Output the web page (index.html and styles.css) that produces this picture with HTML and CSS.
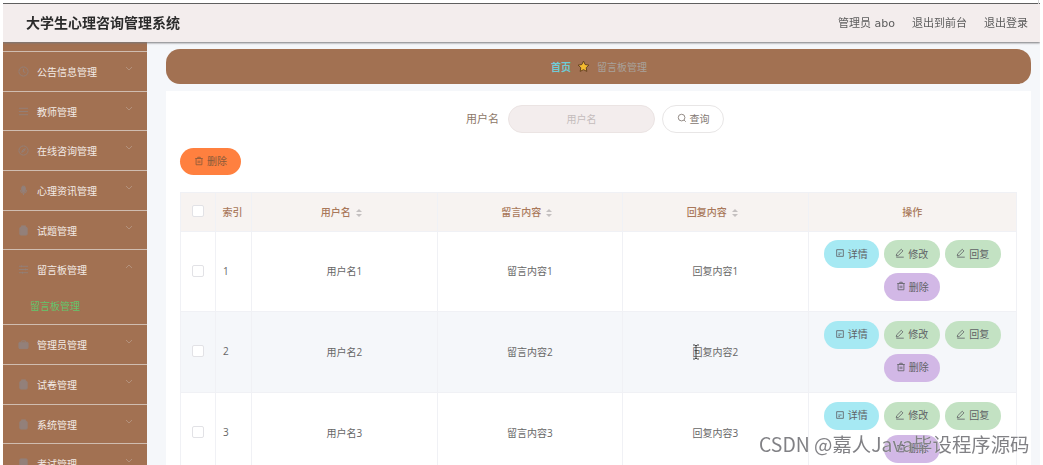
FILE: index.html
```html
<!DOCTYPE html>
<html lang="zh-CN">
<head>
<meta charset="utf-8">
<title>大学生心理咨询管理系统</title>
<link rel="stylesheet" href="styles.css">
</head>
<body>
<div class="app">
  <header class="navbar">
    <div class="brand">大学生心理咨询管理系统</div>
    <nav class="user-links"><span>管理员 abo</span><span>退出到前台</span><span>退出登录</span></nav>
  </header>
  <div class="layout">
    <aside class="sidebar">
      <div class="menu-item"><svg class="ico" viewBox="0 0 12 12"><circle cx="6" cy="6" r="5"/><path d="M6 3v3.2l2 1"/></svg><span class="menu-label">公告信息管理</span><svg class="chev" viewBox="0 0 8 5"><path d="M1 1l3 3 3-3"/></svg></div>
      <div class="menu-item"><svg class="ico" viewBox="0 0 12 12"><path d="M1 2.5h10M1 6h10M1 9.5h10"/></svg><span class="menu-label">教师管理</span><svg class="chev" viewBox="0 0 8 5"><path d="M1 1l3 3 3-3"/></svg></div>
      <div class="menu-item"><svg class="ico" viewBox="0 0 12 12"><circle cx="6" cy="6" r="5"/><path d="M8 4L6.6 6.6 4 8l1.4-2.6z"/></svg><span class="menu-label">在线咨询管理</span><svg class="chev" viewBox="0 0 8 5"><path d="M1 1l3 3 3-3"/></svg></div>
      <div class="menu-item"><svg class="ico" viewBox="0 0 12 12"><rect x="4" y="1" width="4" height="7" rx="2" class="solid"/><path d="M2.5 5.5a3.5 3.5 0 0 0 7 0M6 9v2"/></svg><span class="menu-label">心理资讯管理</span><svg class="chev" viewBox="0 0 8 5"><path d="M1 1l3 3 3-3"/></svg></div>
      <div class="menu-item"><svg class="ico" viewBox="0 0 12 12"><rect x="2" y="2.5" width="8" height="8.5" rx="1" class="solid"/><rect x="4" y="1" width="4" height="2.4" class="solid"/></svg><span class="menu-label">试题管理</span><svg class="chev" viewBox="0 0 8 5"><path d="M1 1l3 3 3-3"/></svg></div>
      <div class="menu-item menu-open"><svg class="ico" viewBox="0 0 12 12"><path d="M1 2.5h10M1 6h10M1 9.5h10M4 1.5v2M8 5v2M5 8.5v2"/></svg><span class="menu-label">留言板管理</span><svg class="chev" viewBox="0 0 8 5"><path d="M1 4l3-3 3 3"/></svg></div>
      <div class="submenu-item">留言板管理</div>
      <div class="menu-item"><svg class="ico" viewBox="0 0 12 12"><rect x="1" y="3.5" width="10" height="7" rx="1" class="solid"/><path d="M4 3.5V2h4v1.5"/></svg><span class="menu-label">管理员管理</span><svg class="chev" viewBox="0 0 8 5"><path d="M1 1l3 3 3-3"/></svg></div>
      <div class="menu-item"><svg class="ico" viewBox="0 0 12 12"><rect x="2" y="2.5" width="8" height="8.5" rx="1" class="solid"/><rect x="4" y="1" width="4" height="2.4" class="solid"/></svg><span class="menu-label">试卷管理</span><svg class="chev" viewBox="0 0 8 5"><path d="M1 1l3 3 3-3"/></svg></div>
      <div class="menu-item"><svg class="ico" viewBox="0 0 12 12"><rect x="2" y="2.5" width="8" height="8.5" rx="1" class="solid"/><rect x="4" y="1" width="4" height="2.4" class="solid"/></svg><span class="menu-label">系统管理</span><svg class="chev" viewBox="0 0 8 5"><path d="M1 1l3 3 3-3"/></svg></div>
      <div class="menu-item"><svg class="ico" viewBox="0 0 12 12"><rect x="2" y="1" width="8" height="10" rx="1" class="solid"/></svg><span class="menu-label">考试管理</span><svg class="chev" viewBox="0 0 8 5"><path d="M1 1l3 3 3-3"/></svg></div>
    </aside>
    <main class="main">
      <div class="crumbs">
        <span class="crumb-home">首页</span>
        <svg class="crumb-star" viewBox="0 0 14 14"><path d="M7 1.2l1.8 3.7 4 .6-2.9 2.8.7 4L7 10.4l-3.6 1.9.7-4L1.2 5.5l4-.6z"/></svg>
        <span class="crumb-current">留言板管理</span>
      </div>
      <section class="card">
        <div class="search">
          <label class="search-label">用户名</label>
          <div class="search-input">用户名</div>
          <button class="search-btn"><svg class="btn-ico" viewBox="0 0 12 12"><circle cx="5.5" cy="5.5" r="4"/><path d="M8.5 8.5l2 2"/></svg>查询</button>
        </div>
        <button class="del-btn"><svg class="btn-ico" viewBox="0 0 12 12"><path d="M1.5 3h9M4.5 3V1.5h3V3M2.5 3v7.5h7V3M5 5.5v3M7 5.5v3"/></svg>删除</button>
        <table class="grid">
          <colgroup><col class="c-check"><col class="c-index"><col class="c-text"><col class="c-text"><col class="c-text"><col></colgroup>
          <thead>
            <tr>
              <th><span class="checkbox"></span></th>
              <th class="th-index">索引</th>
              <th>用户名<span class="sort"></span></th>
              <th>留言内容<span class="sort"></span></th>
              <th>回复内容<span class="sort"></span></th>
              <th>操作</th>
            </tr>
          </thead>
          <tbody>
            <tr>
              <td><span class="checkbox"></span></td><td class="idx">1</td><td>用户名1</td><td>留言内容1</td><td>回复内容1</td>
              <td><div class="actions">
                <button class="act act-detail"><svg class="btn-ico" viewBox="0 0 12 12"><path d="M2 2h8v8H2zM4 6h4M4 8h2"/></svg>详情</button>
                <button class="act act-edit"><svg class="btn-ico" viewBox="0 0 12 12"><path d="M7.5 1.5l2 2L4 9l-2.5.5L2 7zM1.5 11h9"/></svg>修改</button>
                <button class="act act-edit"><svg class="btn-ico" viewBox="0 0 12 12"><path d="M7.5 1.5l2 2L4 9l-2.5.5L2 7zM1.5 11h9"/></svg>回复</button>
                <button class="act act-del"><svg class="btn-ico" viewBox="0 0 12 12"><path d="M1.5 3h9M4.5 3V1.5h3V3M2.5 3v7.5h7V3M5 5.5v3M7 5.5v3"/></svg>删除</button>
              </div></td>
            </tr>
            <tr class="row-hover">
              <td><span class="checkbox"></span></td><td class="idx">2</td><td>用户名2</td><td>留言内容2</td><td>回复内容2</td>
              <td><div class="actions">
                <button class="act act-detail"><svg class="btn-ico" viewBox="0 0 12 12"><path d="M2 2h8v8H2zM4 6h4M4 8h2"/></svg>详情</button>
                <button class="act act-edit"><svg class="btn-ico" viewBox="0 0 12 12"><path d="M7.5 1.5l2 2L4 9l-2.5.5L2 7zM1.5 11h9"/></svg>修改</button>
                <button class="act act-edit"><svg class="btn-ico" viewBox="0 0 12 12"><path d="M7.5 1.5l2 2L4 9l-2.5.5L2 7zM1.5 11h9"/></svg>回复</button>
                <button class="act act-del"><svg class="btn-ico" viewBox="0 0 12 12"><path d="M1.5 3h9M4.5 3V1.5h3V3M2.5 3v7.5h7V3M5 5.5v3M7 5.5v3"/></svg>删除</button>
              </div></td>
            </tr>
            <tr>
              <td><span class="checkbox"></span></td><td class="idx">3</td><td>用户名3</td><td>留言内容3</td><td>回复内容3</td>
              <td><div class="actions">
                <button class="act act-detail"><svg class="btn-ico" viewBox="0 0 12 12"><path d="M2 2h8v8H2zM4 6h4M4 8h2"/></svg>详情</button>
                <button class="act act-edit"><svg class="btn-ico" viewBox="0 0 12 12"><path d="M7.5 1.5l2 2L4 9l-2.5.5L2 7zM1.5 11h9"/></svg>修改</button>
                <button class="act act-edit"><svg class="btn-ico" viewBox="0 0 12 12"><path d="M7.5 1.5l2 2L4 9l-2.5.5L2 7zM1.5 11h9"/></svg>回复</button>
                <button class="act act-del"><svg class="btn-ico" viewBox="0 0 12 12"><path d="M1.5 3h9M4.5 3V1.5h3V3M2.5 3v7.5h7V3M5 5.5v3M7 5.5v3"/></svg>删除</button>
              </div></td>
            </tr>
          </tbody>
        </table>
      </section>
    </main>
  </div>
</div>
<svg class="ibeam" viewBox="0 0 8 16"><path d="M1 1h2l1 1 1-1h2M4 2v12M1 15h2l1-1 1 1h2M2.5 6.5h3"/></svg>
<div class="watermark">CSDN @嘉人Java毕设程序源码</div>
</body>
</html>
```
FILE: styles.css
```css
* { box-sizing: border-box; }
html, body { height: 100%; }
body {
  margin: 0;
  padding: 3px 3px 0;
  background: #fff;
  overflow: hidden;
  font-family: "Open Sans", "Noto Sans CJK SC", sans-serif;
  font-size: 10px;
  color: #606266;
}
body::after {
  content: "";
  position: absolute;
  left: 1038px;
  top: 0;
  width: 1px;
  height: 4px;
  background: #d5d5d5;
}
button { font: inherit; border: 0; padding: 0; }
.app {
  height: 462px;
  display: flex;
  flex-direction: column;
  overflow: hidden;
  filter: blur(.4px);
  border-top: 1px solid #5f5f5f;
}
.navbar {
  flex: none;
  height: 38px;
  background: #f3eded;
  display: flex;
  align-items: center;
  justify-content: space-between;
  padding: 0 12px 3px 23px;
  position: relative;
  z-index: 2;
  box-shadow: 0 1px 2px #77777a;
}
.brand { font-size: 14px; font-weight: 700; color: #2b2b2b; }
.user-links { display: flex; gap: 17px; font-size: 11px; color: #5c5c5c; font-family: "DejaVu Sans", "Noto Sans CJK SC", sans-serif; }
.layout { flex: 1; display: flex; min-height: 0; }
.sidebar {
  flex: none;
  width: 144px;
  padding-top: 9px;
  background: #a27152;
  overflow: hidden;
}
.menu-item {
  height: 39.7px;
  display: flex;
  align-items: center;
  padding: 0 14px 0 15px;
  border-top: 1px solid #d0bdb0;
  color: #f3ebe6;
  font-size: 10px;
}
.ico { width: 11px; height: 11px; margin-right: 8px; fill: none; stroke: #93807a; stroke-width: 1; }
.ico .solid { fill: #93807a; }
.menu-label { flex: 1; }
.chev { width: 8px; height: 5px; fill: none; stroke: #b3917c; stroke-width: 1; margin-top: -6px; }
.submenu-item {
  height: 35.3px;
  padding: 0 0 2px 27px;
  display: flex;
  align-items: center;
  color: #63c46c;
  font-size: 10px;
}
.main {
  flex: 1;
  min-width: 0;
  background: #f5f7fa;
  padding: 7px 9px 0 19px;
  display: flex;
  flex-direction: column;
  gap: 7px;
}
.crumbs {
  flex: none;
  height: 35px;
  border-radius: 14px;
  background: #a27152;
  display: flex;
  align-items: center;
  justify-content: center;
  font-size: 10px;
  padding-left: 1px;
}
.crumb-home { color: #6fcbd6; font-weight: 700; }
.crumb-star { width: 13px; height: 13px; margin: 0 7px 0 6px; fill: #f4bb30; stroke: #5e3c22; stroke-width: 1; }
.crumb-current { color: #a8a29c; }
.card { flex: 1; background: #fff; padding: 14px 14px 0; min-height: 0; overflow: hidden; }
.search { display: flex; align-items: center; justify-content: center; height: 28px; padding-right: 7px; }
.search-label { color: #8d7768; margin-right: 9px; font-size: 11px; padding-bottom: 2px; }
.search-input {
  width: 147px;
  height: 28px;
  border-radius: 14px;
  border: 1px solid #ebe4e3;
  background: #f3eded;
  color: #c4bcbc;
  display: flex;
  align-items: center;
  justify-content: center;
  margin-right: 7px;
  padding-bottom: 2px;
}
.search-btn {
  width: 62px;
  height: 28px;
  border-radius: 14px;
  border: 1px solid #e8e6e6;
  background: #fff;
  color: #7f7670;
  display: flex;
  align-items: center;
  justify-content: center;
  padding-bottom: 2px;
}
.btn-ico { width: 10px; height: 10px; margin-right: 3px; fill: none; stroke: currentColor; stroke-width: 1; flex: none; }
.del-btn {
  display: flex;
  align-items: center;
  justify-content: center;
  width: 61px;
  height: 27px;
  margin: 15px 0 17px;
  padding-bottom: 2px;
  border-radius: 14px;
  background: #ff803f;
  color: #8a5a3a;
}
.grid { width: 837px; border-collapse: collapse; table-layout: fixed; }
.c-check { width: 35px; }
.c-index { width: 36px; }
.c-text { width: 185.5px; }
.grid th, .grid td { border: 1px solid #f0f1f5; text-align: center; padding: 0 0 2px; font-weight: 400; }
.grid th { height: 39px; background: #f7f3f1; color: #a9785a; font-weight: 500; }
.grid .th-index { padding-right: 2px; }
.grid td { height: 81px; color: #666; }
.grid tbody tr:first-child td { height: 80px; }
.grid .idx { text-align: left; padding-left: 7px; }
.row-hover td { background: #f5f7fa; }
.checkbox {
  display: block;
  width: 12px;
  height: 12px;
  margin: 0 auto;
  background: #fff;
  border: 1px solid #e2e2e6;
  border-radius: 2px;
}
.sort {
  display: inline-flex;
  flex-direction: column;
  gap: 2px;
  margin: 0 6px 0 5px;
  vertical-align: middle;
}
.sort::before, .sort::after {
  content: "";
  border-left: 3px solid transparent;
  border-right: 3px solid transparent;
}
.sort::before { border-bottom: 3px solid #c4c0c0; }
.sort::after { border-top: 3px solid #c4c0c0; }
.actions { display: flex; flex-wrap: wrap; justify-content: center; gap: 5px; padding: 0 10px; }
.act {
  width: 56px;
  height: 28px;
  border-radius: 14px;
  display: flex;
  align-items: center;
  justify-content: center;
  padding-bottom: 2px;
  color: #606266;
}
.act-detail { background: #a6e9f3; width: 55px; }
.act-edit { background: #c3e2c3; }
.act-del { background: #d2b8e6; }
.ibeam {
  position: absolute;
  left: 692px;
  top: 344px;
  width: 8px;
  height: 16px;
  fill: none;
  stroke: #444;
  stroke-width: 1;
}
.watermark {
  position: absolute;
  left: 759px;
  top: 431px;
  font-family: "Noto Sans CJK SC", sans-serif;
  font-size: 19.4px;
  line-height: 26px;
  white-space: nowrap;
  color: rgba(115, 115, 120, .9);
  text-shadow: 0 0 1px #fff;
}
```
